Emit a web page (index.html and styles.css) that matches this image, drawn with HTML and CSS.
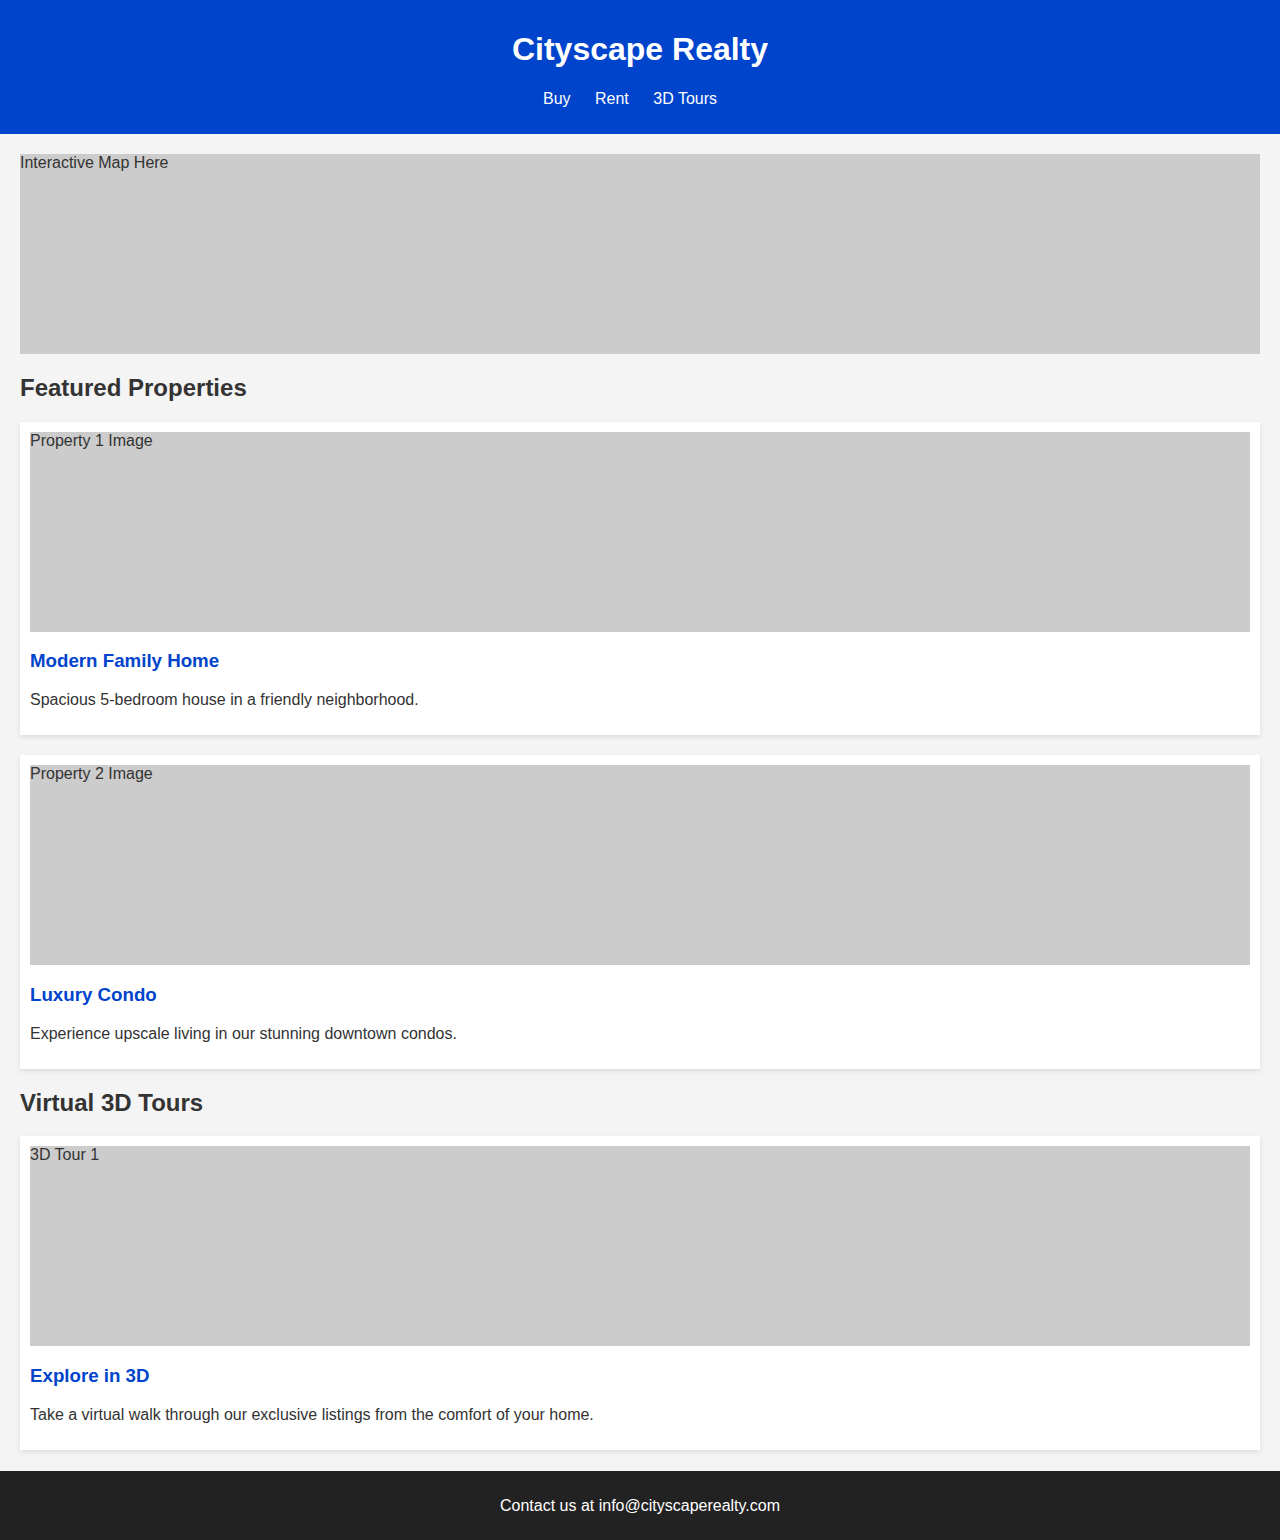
FILE: index.html
```html
<!DOCTYPE html>
<html lang="en">
<head>
<meta charset="utf-8">
<title>Cityscape Realty</title>
<link rel="stylesheet" href="styles.css">
</head>
<body>
<header class="site-header">
  <h1 class="site-title">Cityscape Realty</h1>
  <nav class="site-nav">
    <a href="#">Buy</a> <a href="#">Rent</a> <a href="#">3D Tours</a>
  </nav>
</header>
<main class="main">
  <div class="map">Interactive Map Here</div>
  <section>
    <h2 class="section-title">Featured Properties</h2>
    <div class="card">
      <div class="placeholder">Property 1 Image</div>
      <h3 class="card-title">Modern Family Home</h3>
      <p class="card-text">Spacious 5-bedroom house in a friendly neighborhood.</p>
    </div>
    <div class="card">
      <div class="placeholder">Property 2 Image</div>
      <h3 class="card-title">Luxury Condo</h3>
      <p class="card-text">Experience upscale living in our stunning downtown condos.</p>
    </div>
  </section>
  <section>
    <h2 class="section-title">Virtual 3D Tours</h2>
    <div class="card">
      <div class="placeholder">3D Tour 1</div>
      <h3 class="card-title">Explore in 3D</h3>
      <p class="card-text">Take a virtual walk through our exclusive listings from the comfort of your home.</p>
    </div>
  </section>
</main>
<footer class="site-footer">
  <p class="footer-text">Contact us at info@cityscaperealty.com</p>
</footer>
</body>
</html>
```
FILE: styles.css
```css
body {
  margin: 0;
  font-family: "Liberation Sans", Arial, sans-serif;
  background: #f4f4f4;
  color: #333;
}

.site-header {
  background: #0044cc;
  color: #fff;
  text-align: center;
  padding: 10px 0;
}

.site-title {
  font-size: 32px;
  margin: 21.44px 0;
}

.site-nav {
  margin: 16px 0;
  font-size: 16px;
}

.site-nav a {
  color: #fff;
  text-decoration: none;
  margin-right: 20px;
}

.main {
  padding: 20px 20px 1px;
}

.map {
  height: 200px;
  background: #ccc;
}

.section-title {
  font-size: 24px;
  margin: 19.92px 0;
}

.card {
  background: #fff;
  padding: 10px;
  margin-bottom: 20px;
  box-shadow: 0 2px 5px rgba(0, 0, 0, 0.1);
}

.placeholder {
  height: 200px;
  background: #ccc;
}

.card-title {
  color: #0044cc;
  font-size: 18.72px;
  margin: 18.72px 0;
}

.card-text {
  margin: 16px 0;
}

.site-footer {
  background: #222;
  color: #fff;
  text-align: center;
  padding: 10px 0;
}

.footer-text {
  margin: 16px 0;
}
```
